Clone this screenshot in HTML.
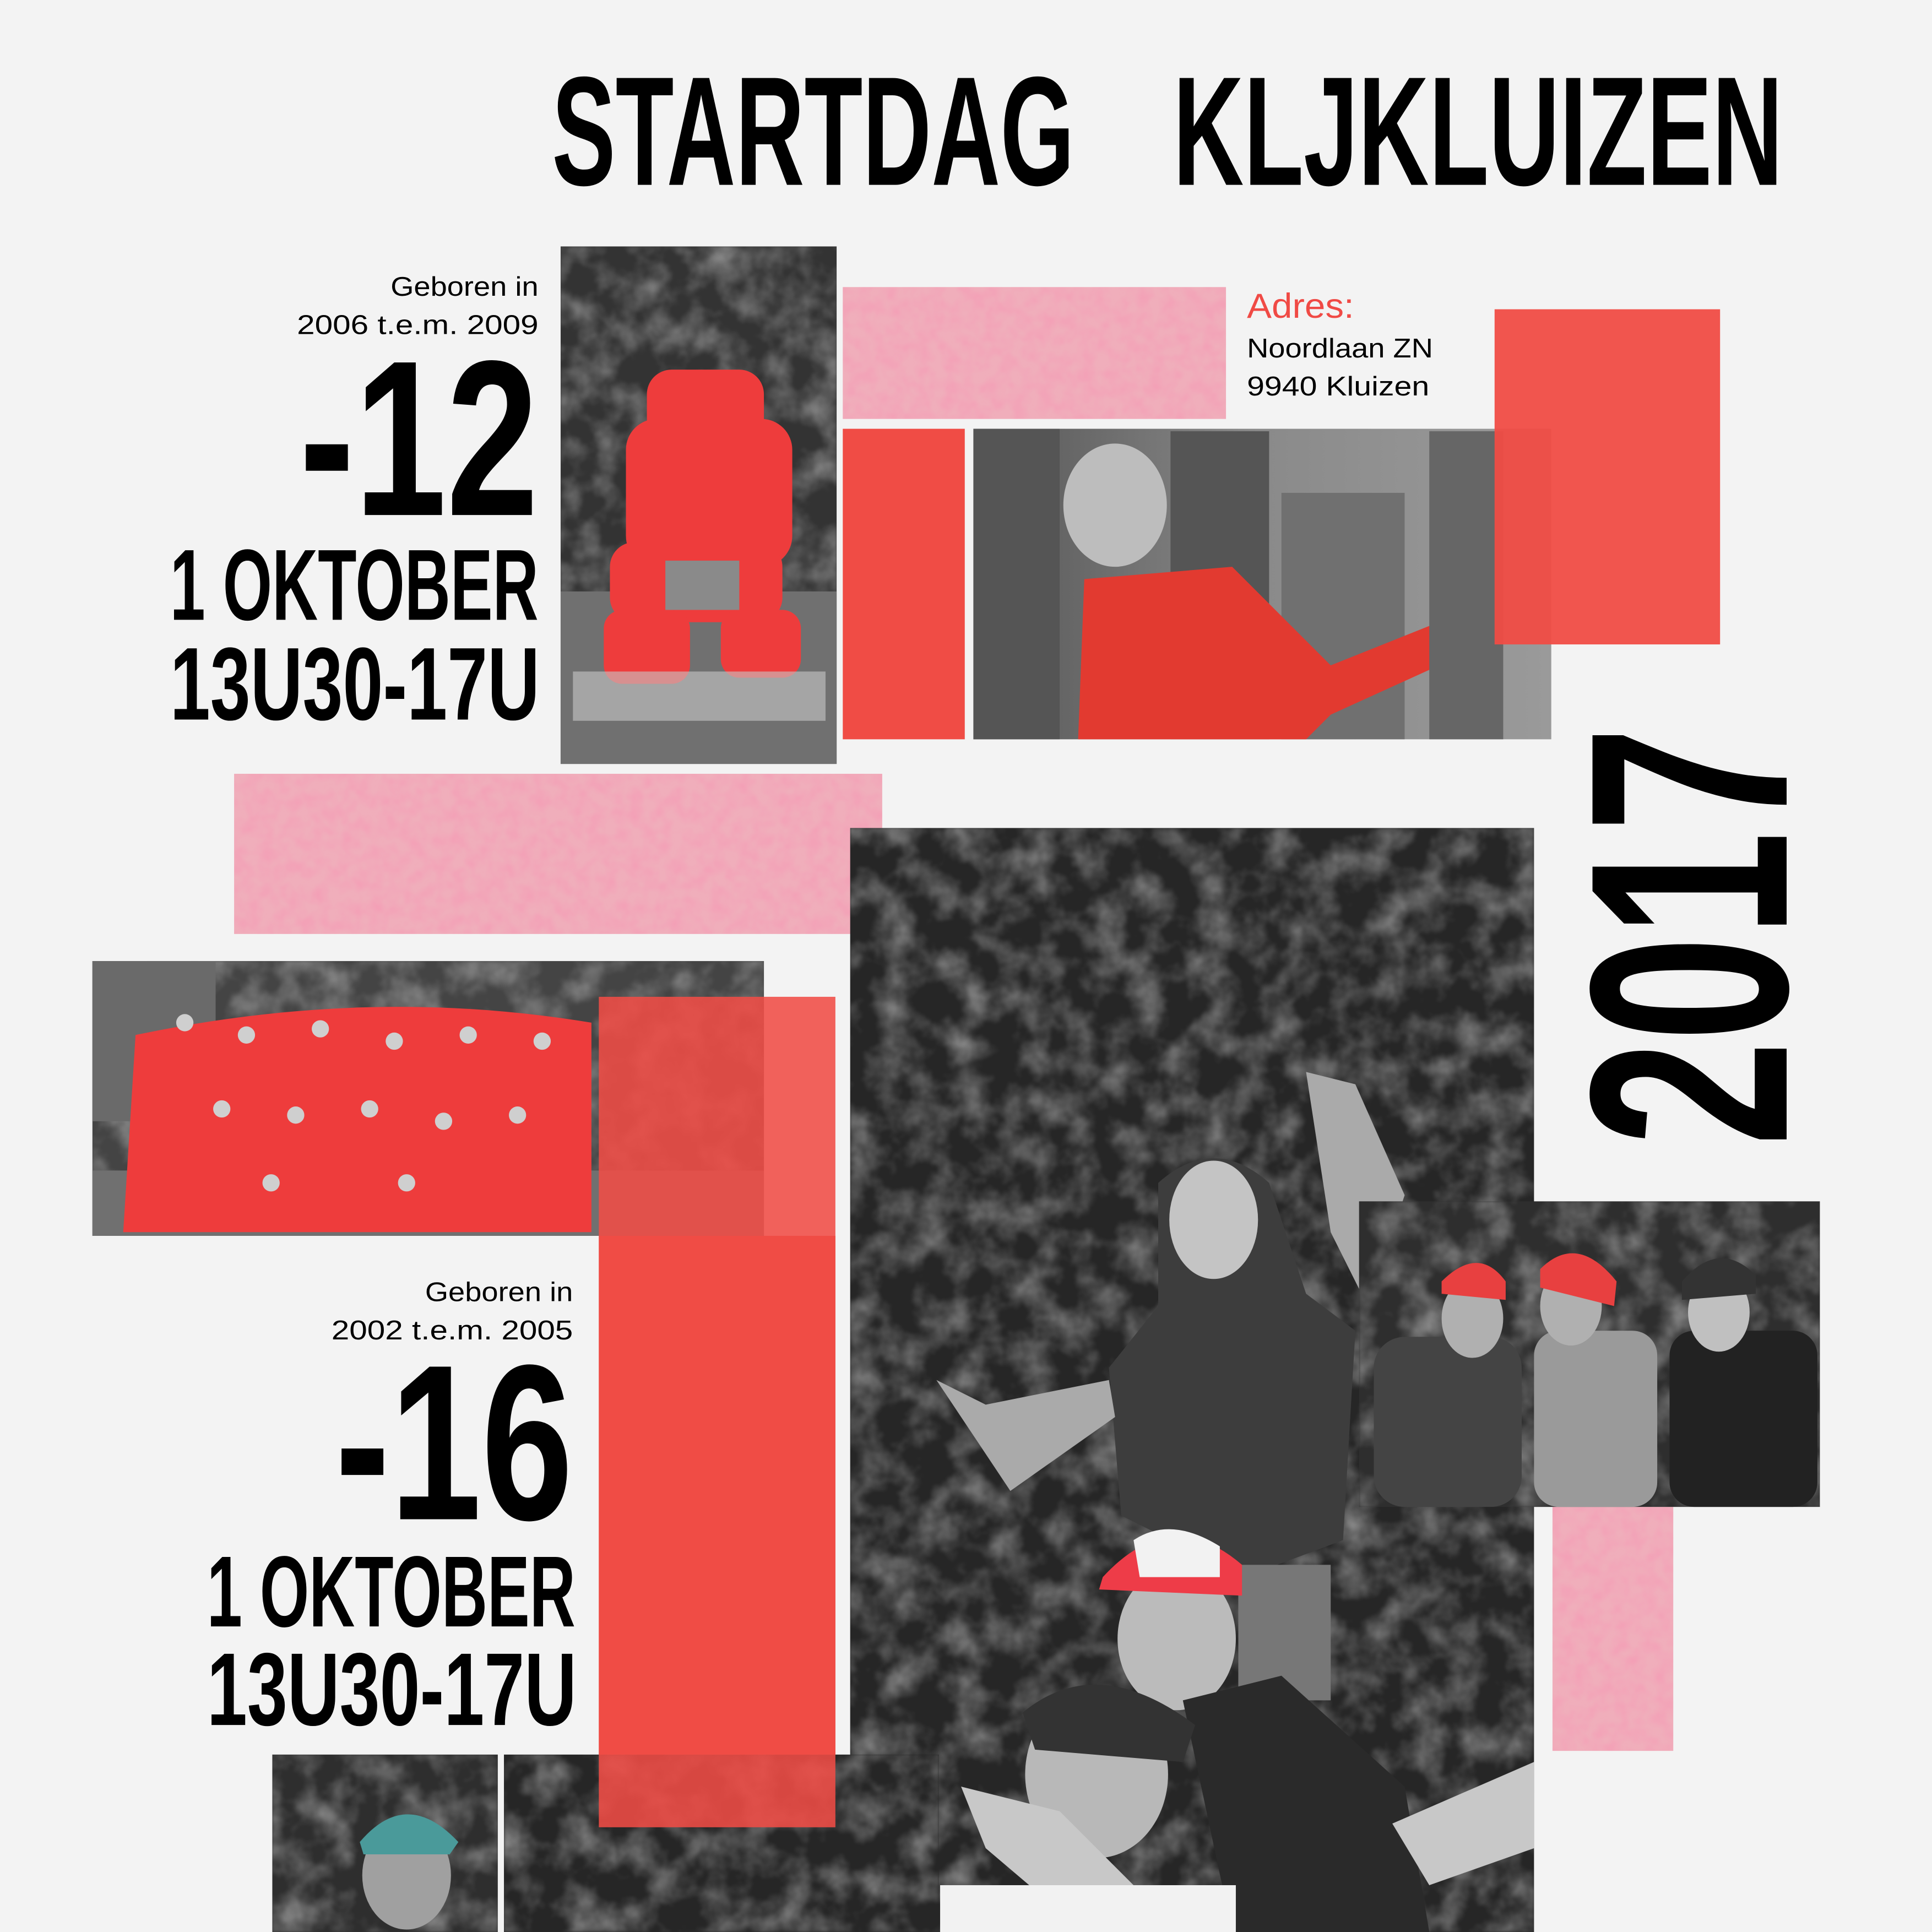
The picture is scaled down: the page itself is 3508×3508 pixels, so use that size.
<!DOCTYPE html>
<html><head><meta charset="utf-8"><style>
html,body{margin:0;padding:0;background:#f3f3f3;}
svg{display:block;}
.c{font-family:"Liberation Sans Narrow","Liberation Sans",sans-serif;font-weight:bold;}
.r{font-family:"Liberation Sans",sans-serif;}
</style></head><body>
<svg width="3508" height="3508" viewBox="0 0 1568 1568" xmlns="http://www.w3.org/2000/svg">
<defs>
<filter id="pink" x="0" y="0" width="100%" height="100%">
<feTurbulence type="fractalNoise" baseFrequency="0.09" numOctaves="3" seed="3" result="n"/>
<feColorMatrix in="n" type="matrix" values="0 0 0 0 0.90  0 0 0 0 0.35  0 0 0 0 0.47  0 0 0 1.8 -0.6"/>
<feGaussianBlur stdDeviation="0.8"/>
<feComposite in2="SourceGraphic" operator="in"/>
</filter>
<filter id="leaf" x="0" y="0" width="100%" height="100%">
<feTurbulence type="fractalNoise" baseFrequency="0.035" numOctaves="4" seed="7" result="n"/>
<feColorMatrix in="n" type="matrix" values="0 0 0 0 0.40  0 0 0 0 0.40  0 0 0 0 0.40  0 0 0 1.3 -0.5"/>
<feGaussianBlur stdDeviation="1"/>
<feComposite in2="SourceGraphic" operator="in"/>
</filter>
<linearGradient id="g2" x1="0" y1="0" x2="1" y2="0"><stop offset="0" stop-color="#555"/><stop offset="0.5" stop-color="#8a8a8a"/><stop offset="1" stop-color="#9a9a9a"/></linearGradient>
</defs>
<rect width="1568" height="1568" fill="#f3f3f3"/>

<text class="c" x="448" y="150" font-size="126" textLength="424" lengthAdjust="spacingAndGlyphs">STARTDAG</text>
<text class="c" x="952" y="150" font-size="126" textLength="495" lengthAdjust="spacingAndGlyphs">KLJKLUIZEN</text>

<!-- photo 1 -->
<rect x="455" y="200" width="224" height="420" fill="#333"/>
<rect x="455" y="200" width="224" height="420" fill="#fff" filter="url(#leaf)"/>
<rect x="455" y="480" width="224" height="140" fill="#707070"/>
<g fill="#ee3c3c">
<rect x="525" y="300" width="95" height="60" rx="20"/>
<rect x="508" y="340" width="135" height="120" rx="25"/>
<rect x="495" y="440" width="140" height="65" rx="20"/>
<rect x="490" y="495" width="70" height="60" rx="15"/>
<rect x="585" y="495" width="65" height="55" rx="15"/>
</g>
<rect x="540" y="455" width="60" height="40" fill="#8a8a8a"/>
<rect x="465" y="545" width="205" height="40" fill="#c8c8c8" opacity="0.6"/>

<!-- pink textures -->
<rect x="684" y="233" width="311" height="107" fill="#f0aebb"/>
<rect x="684" y="233" width="311" height="107" fill="#fff" filter="url(#pink)"/>
<rect x="190" y="628" width="526" height="130" fill="#f0aebb"/>
<rect x="190" y="628" width="526" height="130" fill="#fff" filter="url(#pink)"/>
<rect x="1260" y="1223" width="98" height="198" fill="#f0aebb"/>
<rect x="1260" y="1223" width="98" height="198" fill="#fff" filter="url(#pink)"/>

<text class="r" x="1012" y="258" font-size="28" fill="#f04a45" textLength="87" lengthAdjust="spacingAndGlyphs">Adres:</text>
<text class="r" x="1012" y="290" font-size="22" textLength="151" lengthAdjust="spacingAndGlyphs">Noordlaan ZN</text>
<text class="r" x="1012" y="321" font-size="22" textLength="148" lengthAdjust="spacingAndGlyphs">9940 Kluizen</text>

<rect x="684" y="348" width="99" height="252" fill="#f04c45"/>

<!-- photo 2 -->
<rect x="790" y="348" width="469" height="252" fill="url(#g2)"/>
<rect x="790" y="348" width="70" height="252" fill="#555"/>
<rect x="950" y="350" width="80" height="250" fill="#555"/>
<rect x="1040" y="400" width="100" height="200" fill="#707070"/>
<path d="M880 470 L1000 460 L1080 540 L1180 500 L1190 530 L1080 580 L1060 600 L875 600 Z" fill="#e23a30"/>
<ellipse cx="905" cy="410" rx="42" ry="50" fill="#bdbdbd"/>
<rect x="1160" y="350" width="60" height="250" fill="#666"/>
<rect x="1213" y="251" width="183" height="272" fill="#f04c45" opacity="0.95"/>

<text class="r" x="317" y="240" font-size="22" textLength="120" lengthAdjust="spacingAndGlyphs">Geboren in</text>
<text class="r" x="241" y="271" font-size="22" textLength="196" lengthAdjust="spacingAndGlyphs">2006 t.e.m. 2009</text>
<text class="c" x="243" y="418" font-size="180" textLength="194" lengthAdjust="spacingAndGlyphs">-12</text>
<text class="c" x="138" y="503" font-size="82" textLength="299" lengthAdjust="spacingAndGlyphs">1 OKTOBER</text>
<text class="c" x="138" y="584" font-size="84" textLength="300" lengthAdjust="spacingAndGlyphs">13U30-17U</text>

<!-- big photo -->
<rect x="690" y="672" width="555" height="896" fill="#262626"/>
<rect x="690" y="672" width="555" height="896" fill="#fff" filter="url(#leaf)"/>
<path d="M940 960 Q985 920 1030 960 L1060 1050 L1100 1080 L1090 1250 L1010 1280 L910 1230 L900 1110 L940 1060 Z" fill="#3d3d3d"/>
<ellipse cx="985" cy="990" rx="36" ry="48" fill="#c4c4c4"/>
<path d="M760 1120 L800 1140 L900 1120 L905 1150 L820 1210 Z" fill="#aaa"/>
<path d="M1060 870 L1100 880 L1140 970 L1110 1060 L1080 1000 Z" fill="#aaa"/>
<rect x="1005" y="1270" width="75" height="110" fill="#777"/>
<ellipse cx="955" cy="1330" rx="48" ry="58" fill="#bbb"/>
<path d="M895 1280 Q950 1220 1008 1270 L1008 1295 L892 1290 Z" fill="#ee3c48"/>
<path d="M920 1250 Q950 1230 990 1255 L990 1280 L925 1280 Z" fill="#f2f2f2"/>
<path d="M960 1380 L1040 1360 L1140 1450 L1160 1568 L1000 1568 Z" fill="#2a2a2a"/>
<ellipse cx="890" cy="1440" rx="58" ry="68" fill="#b8b8b8"/>
<path d="M830 1390 Q890 1340 970 1400 L960 1430 L840 1420 Z" fill="#333"/>
<path d="M780 1450 L860 1470 L920 1530 L880 1568 L800 1500 Z" fill="#c8c8c8"/>
<rect x="763" y="1530" width="240" height="38" fill="#f2f2f2"/>
<path d="M1130 1480 L1245 1430 L1245 1500 L1160 1530 Z" fill="#c8c8c8"/>

<text class="r" font-weight="bold" font-size="229" transform="translate(1450 930) rotate(-90)" textLength="340" lengthAdjust="spacingAndGlyphs">2017</text>

<!-- photo 3 -->
<rect x="1103" y="975" width="374" height="248" fill="#2e2e2e"/>
<rect x="1103" y="975" width="374" height="248" fill="#fff" filter="url(#leaf)"/>
<rect x="1115" y="1085" width="120" height="138" rx="25" fill="#444"/>
<rect x="1245" y="1080" width="100" height="143" rx="20" fill="#9a9a9a"/>
<rect x="1355" y="1080" width="120" height="143" rx="20" fill="#222"/>
<ellipse cx="1195" cy="1070" rx="25" ry="32" fill="#b0b0b0"/>
<ellipse cx="1275" cy="1060" rx="25" ry="32" fill="#b0b0b0"/>
<ellipse cx="1395" cy="1065" rx="25" ry="32" fill="#c0c0c0"/>
<path d="M1170 1040 Q1200 1010 1222 1040 L1222 1055 L1170 1050 Z" fill="#e84040"/>
<path d="M1250 1030 Q1280 1000 1312 1040 L1310 1060 L1250 1045 Z" fill="#e84040"/>
<path d="M1365 1040 Q1395 1005 1425 1035 L1425 1050 L1365 1055 Z" fill="#333"/>

<!-- photo group 2 -->
<rect x="75" y="780" width="545" height="223" fill="#444"/>
<rect x="75" y="780" width="545" height="223" fill="#fff" filter="url(#leaf)"/>
<rect x="75" y="780" width="100" height="130" fill="#6a6a6a"/>
<rect x="75" y="950" width="545" height="53" fill="#707070"/>
<path d="M110 840 Q300 800 480 830 L480 1000 L100 1000 Z" fill="#ee3c3c"/>
<g fill="#cfcfcf"><circle cx="150" cy="830" r="7"/><circle cx="200" cy="840" r="7"/><circle cx="260" cy="835" r="7"/><circle cx="320" cy="845" r="7"/><circle cx="380" cy="840" r="7"/><circle cx="440" cy="845" r="7"/><circle cx="180" cy="900" r="7"/><circle cx="240" cy="905" r="7"/><circle cx="300" cy="900" r="7"/><circle cx="360" cy="910" r="7"/><circle cx="420" cy="905" r="7"/><circle cx="220" cy="960" r="7"/><circle cx="330" cy="960" r="7"/></g>

<!-- bottom photos -->
<rect x="221" y="1424" width="183" height="144" fill="#2e2e2e"/>
<rect x="221" y="1424" width="183" height="144" fill="#fff" filter="url(#leaf)"/>
<ellipse cx="330" cy="1522" rx="36" ry="44" fill="#a0a0a0"/>
<path d="M292 1495 Q330 1450 372 1495 L365 1505 L295 1505 Z" fill="#4a9a9a"/>
<rect x="409" y="1424" width="353" height="144" fill="#262626"/>
<rect x="409" y="1424" width="353" height="144" fill="#fff" filter="url(#leaf)"/>

<rect x="486" y="809" width="192" height="674" fill="#f04c45" opacity="0.88"/>
<rect x="486" y="1003" width="192" height="421" fill="#f04c45"/>

<text class="r" x="345" y="1056" font-size="22" textLength="120" lengthAdjust="spacingAndGlyphs">Geboren in</text>
<text class="r" x="269" y="1087" font-size="22" textLength="196" lengthAdjust="spacingAndGlyphs">2002 t.e.m. 2005</text>
<text class="c" x="272" y="1233" font-size="180" textLength="193" lengthAdjust="spacingAndGlyphs">-16</text>
<text class="c" x="168" y="1320" font-size="82" textLength="299" lengthAdjust="spacingAndGlyphs">1 OKTOBER</text>
<text class="c" x="168" y="1400" font-size="84" textLength="300" lengthAdjust="spacingAndGlyphs">13U30-17U</text>
</svg>
</body></html>
